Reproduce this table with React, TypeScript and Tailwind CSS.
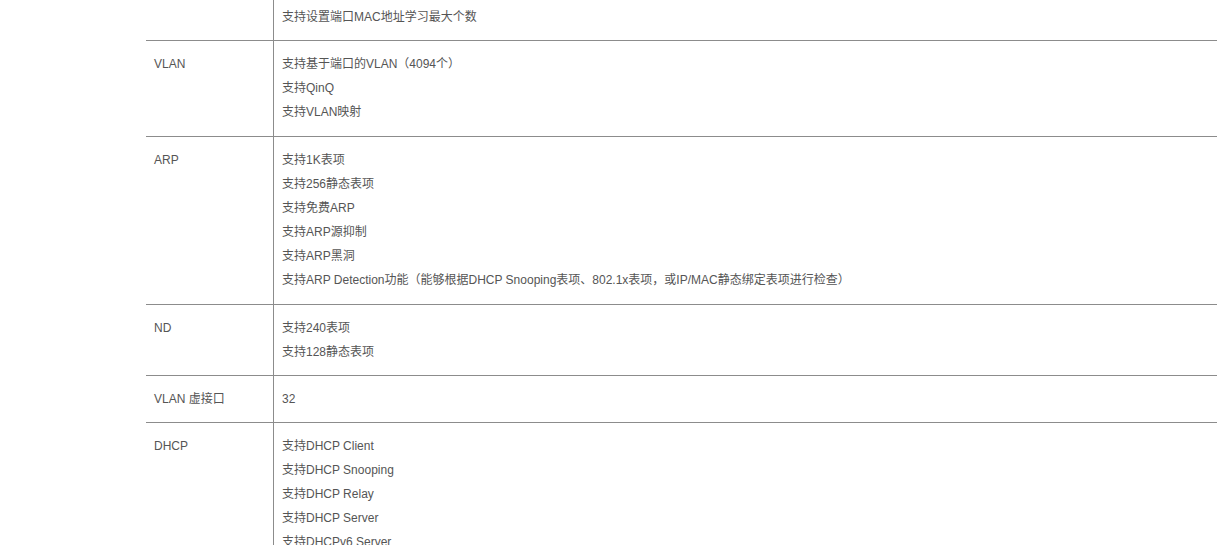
import React from "react";

type Row = { label: string; lines: string[]; pt?: string; pb?: string };

const rows: Row[] = [
  { label: "", lines: ["支持设置端口MAC地址学习最大个数"], pt: "pt-[5px]", pb: "pb-[11px]" },
  {
    label: "VLAN",
    lines: ["支持基于端口的VLAN（4094个）", "支持QinQ", "支持VLAN映射"],
    pb: "pb-[12px]",
  },
  {
    label: "ARP",
    lines: [
      "支持1K表项",
      "支持256静态表项",
      "支持免费ARP",
      "支持ARP源抑制",
      "支持ARP黑洞",
      "支持ARP Detection功能（能够根据DHCP Snooping表项、802.1x表项，或IP/MAC静态绑定表项进行检查）",
    ],
    pb: "pb-[12px]",
  },
  { label: "ND", lines: ["支持240表项", "支持128静态表项"] },
  { label: "VLAN 虚接口", lines: ["32"] },
  {
    label: "DHCP",
    lines: [
      "支持DHCP Client",
      "支持DHCP Snooping",
      "支持DHCP Relay",
      "支持DHCP Server",
      "支持DHCPv6 Server",
      "支持DHCPv6 Relay",
    ],
  },
];

export default function App() {
  return (
    <div
      className="w-full min-h-[545px] bg-white text-[12px] leading-[24px] text-[#555555]"
      style={{ fontFamily: '"Liberation Sans", Arial, "Noto Sans CJK SC", sans-serif' }}
    >
      <div className="ml-[146px] flex flex-col">
        {rows.map((r, i) => (
          <div
            key={i}
            className={`flex ${i > 0 ? "border-t border-[#8c8c8c]" : ""}`}
          >
            <div
              className={`w-[128px] shrink-0 border-r border-[#8c8c8c] pl-[8px] ${r.pt ?? "pt-[11px]"} ${r.pb ?? "pb-[11px]"}`}
            >
              {r.label}
            </div>
            <div className={`flex-1 pl-[8px] ${r.pt ?? "pt-[11px]"} ${r.pb ?? "pb-[11px]"}`}>
              {r.lines.map((l, j) => (
                <p key={j} className="whitespace-nowrap">
                  {l}
                </p>
              ))}
            </div>
          </div>
        ))}
      </div>
    </div>
  );
}
